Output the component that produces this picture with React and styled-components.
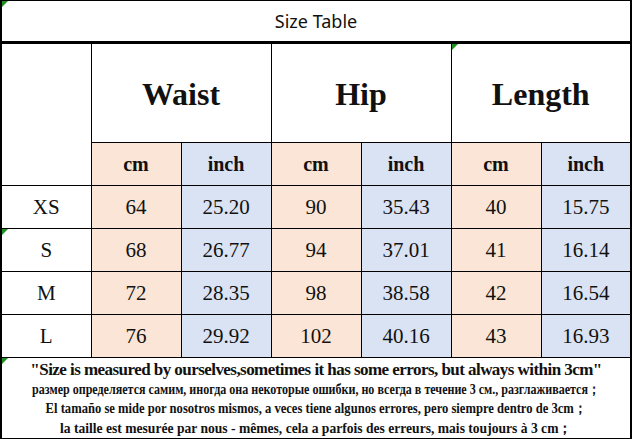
import React from 'react'
import styled, { createGlobalStyle } from 'styled-components'

const GlobalStyle = createGlobalStyle`
  html, body {
    margin: 0;
    padding: 0;
    background: #ffffff;
  }
`;

const Table = styled.table`
  width: 631px;
  border-collapse: collapse;
  table-layout: fixed;
  font-family: "Liberation Serif", "Times New Roman", serif;
  color: #111;
  border-left: 2px solid #000;
  border-right: 2px solid #000;
  border-bottom: 2px solid #000;
`;

const Cell = styled.td`
  position: relative;
  border: 1px solid #000;
  padding: 0;
  text-align: center;
  vertical-align: middle;
  background: ${(props) =>
    props.tone === 'cm' ? '#fbe5d6' : props.tone === 'inch' ? '#dae3f3' : '#ffffff'};
`;

const TitleCell = styled(Cell)`
  height: 40px;
  border-top: 1px solid #000;
  border-bottom: 3px solid #000;
  font-family: "Noto Sans", "Liberation Sans", sans-serif;
  font-size: 18px;
  color: #111;
`;

const HeadCell = styled(Cell)`
  height: 95px;
  font-size: 32px;
  font-weight: bold;
  padding-top: 3px;
`;

const UnitCell = styled(Cell)`
  height: 42px;
  font-size: 20px;
  font-weight: bold;
`;

const DataCell = styled(Cell)`
  height: 42px;
  font-size: 21px;
`;

const NoteCell = styled(Cell)`
  height: 78px;
  padding: 2px 0 0;
  font-weight: bold;
  line-height: 19.5px;
  overflow: hidden;
`;

const NoteLine = styled.div`
  display: flex;
  justify-content: center;
  white-space: nowrap;
  font-size: ${(props) => (props.big ? '17px' : '14px')};
  letter-spacing: ${(props) => (props.big ? '-0.55px' : '0')};
  transform: scaleX(${(props) => props.squeeze || 1});
  transform-origin: center;
`;

const Mark = styled.span`
  position: absolute;
  top: 0;
  left: 0;
  width: 0;
  height: 0;
  border-top: 6px solid #1f8f1f;
  border-right: 6px solid transparent;
`;

const sizes = [
  { label: 'XS', vals: ['64', '25.20', '90', '35.43', '40', '15.75'] },
  { label: 'S', vals: ['68', '26.77', '94', '37.01', '41', '16.14'], mark: true },
  { label: 'M', vals: ['72', '28.35', '98', '38.58', '42', '16.54'] },
  { label: 'L', vals: ['76', '29.92', '102', '40.16', '43', '16.93'] },
];

const tones = ['cm', 'inch', 'cm', 'inch', 'cm', 'inch'];

const App = () => {
  return (
    <>
      <GlobalStyle />
      <Table>
        <colgroup>
          {Array.from({ length: 7 }).map((_, i) => (
            <col key={i} style={{ width: 90 }} />
          ))}
        </colgroup>
        <tbody>
          <tr>
            <TitleCell colSpan={7}>
              <Mark />
              Size Table
            </TitleCell>
          </tr>
          <tr>
            <HeadCell rowSpan={2} />
            <HeadCell colSpan={2}>Waist</HeadCell>
            <HeadCell colSpan={2}>Hip</HeadCell>
            <HeadCell colSpan={2}>
              <Mark />
              Length
            </HeadCell>
          </tr>
          <tr>
            {tones.map((t, i) => (
              <UnitCell key={i} tone={t}>{t}</UnitCell>
            ))}
          </tr>
          {sizes.map((s) => (
            <tr key={s.label}>
              <DataCell>
                {s.mark && <Mark />}
                {s.label}
              </DataCell>
              {s.vals.map((v, i) => (
                <DataCell key={i} tone={tones[i]}>{v}</DataCell>
              ))}
            </tr>
          ))}
          <tr>
            <NoteCell colSpan={7}>
              <Mark />
              <NoteLine big>"Size is measured by ourselves,sometimes it has some errors, but always within 3cm"</NoteLine>
              <NoteLine squeeze={0.86}>размер определяется самим, иногда она некоторые ошибки, но всегда в течение 3 см., разглаживается；</NoteLine>
              <NoteLine squeeze={0.9}>El tamaño se mide por nosotros mismos, a veces tiene algunos errores, pero siempre dentro de 3cm；</NoteLine>
              <NoteLine squeeze={0.97}>la taille est mesurée par nous - mêmes, cela a parfois des erreurs, mais toujours à 3 cm；</NoteLine>
            </NoteCell>
          </tr>
        </tbody>
      </Table>
    </>
  )
}

export default App
